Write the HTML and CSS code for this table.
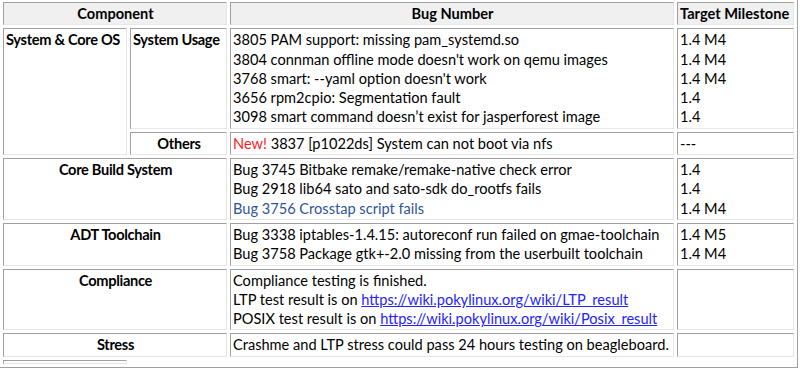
FILE: index.html
```html
<!DOCTYPE html>
<html>
<head>
<meta charset="utf-8">
<link rel="stylesheet" href="styles.css">
</head>
<body>
<table class="bugs">
  <colgroup>
    <col class="c1"><col class="c2"><col class="c3"><col class="c4">
  </colgroup>
  <tr class="head">
    <th colspan="2" class="center">Component</th>
    <th class="center">Bug Number</th>
    <th class="left">Target Milestone</th>
  </tr>
  <tr>
    <td rowspan="2" class="label">System &amp; Core OS</td>
    <td class="label">System Usage</td>
    <td>3805 PAM support: missing pam_systemd.so<br>3804 connman offline mode doesn't work on qemu images<br>3768 smart: --yaml option doesn't work<br>3656 rpm2cpio: Segmentation fault<br>3098 smart command doesn’t exist for jasperforest image</td>
    <td>1.4 M4<br>1.4 M4<br>1.4 M4<br>1.4<br>1.4</td>
  </tr>
  <tr>
    <td class="label center">Others</td>
    <td><span class="new">New!</span> 3837 [p1022ds] System can not boot via nfs</td>
    <td>---</td>
  </tr>
  <tr>
    <td colspan="2" class="label center">Core Build System</td>
    <td>Bug 3745 Bitbake remake/remake-native check error<br>Bug 2918 lib64 sato and sato-sdk do_rootfs fails<br><span class="muted">Bug 3756 Crosstap script fails</span></td>
    <td>1.4<br>1.4<br>1.4 M4</td>
  </tr>
  <tr>
    <td colspan="2" class="label center">ADT Toolchain</td>
    <td>Bug 3338 iptables-1.4.15: autoreconf run failed on gmae-toolchain<br>Bug 3758 Package gtk+-2.0 missing from the userbuilt toolchain</td>
    <td>1.4 M5<br>1.4 M4</td>
  </tr>
  <tr>
    <td colspan="2" class="label center">Compliance</td>
    <td>Compliance testing is finished.<br>LTP test result is on <a href="#">https://wiki.pokylinux.org/wiki/LTP_result</a><br>POSIX test result is on <a href="#">https://wiki.pokylinux.org/wiki/Posix_result</a></td>
    <td></td>
  </tr>
  <tr>
    <td colspan="2" class="label center">Stress</td>
    <td>Crashme and LTP stress could pass 24 hours testing on beagleboard.</td>
    <td></td>
  </tr>
  <tr class="tail">
    <td></td>
  </tr>
</table>
</body>
</html>
```

FILE: styles.css
```css
html, body {
  margin: 0;
  padding: 0;
  background: #ffffff;
  overflow: hidden;
}

.bugs {
  margin: -2px 0 0 -1px;
  width: 799px;
  table-layout: fixed;
  border-collapse: separate;
  border-spacing: 3px;
  border: 1px solid;
  border-color: #f0f0f0 #a0a0a0 #a0a0a0 #f0f0f0;
  font-family: "Lato", "Liberation Sans", sans-serif;
  font-size: 14.6px;
  line-height: 19.3px;
  color: #000000;
}

.c1 { width: 124px; }
.c2 { width: 97px; }
.c3 { width: 444px; }
.c4 { width: 117px; }

.bugs th,
.bugs td {
  border: 1px solid;
  border-color: #a0a0a0 #e6e6e6 #e6e6e6 #a0a0a0;
  padding: 1px 1px 1px 2px;
  vertical-align: top;
  text-align: left;
  white-space: nowrap;
  overflow: hidden;
}

.bugs .head th {
  background: #f0f0f0;
  font-weight: bold;
}

.bugs .center { text-align: center; }
.bugs .left { text-align: left; }

.label {
  font-weight: bold;
  letter-spacing: -0.3px;
}

.new { color: #ff1a2a; }
.muted { color: #2f5597; }

.bugs a {
  color: #2424ff;
  text-decoration: underline;
}

.tail td {
  padding: 1px;
}
```
